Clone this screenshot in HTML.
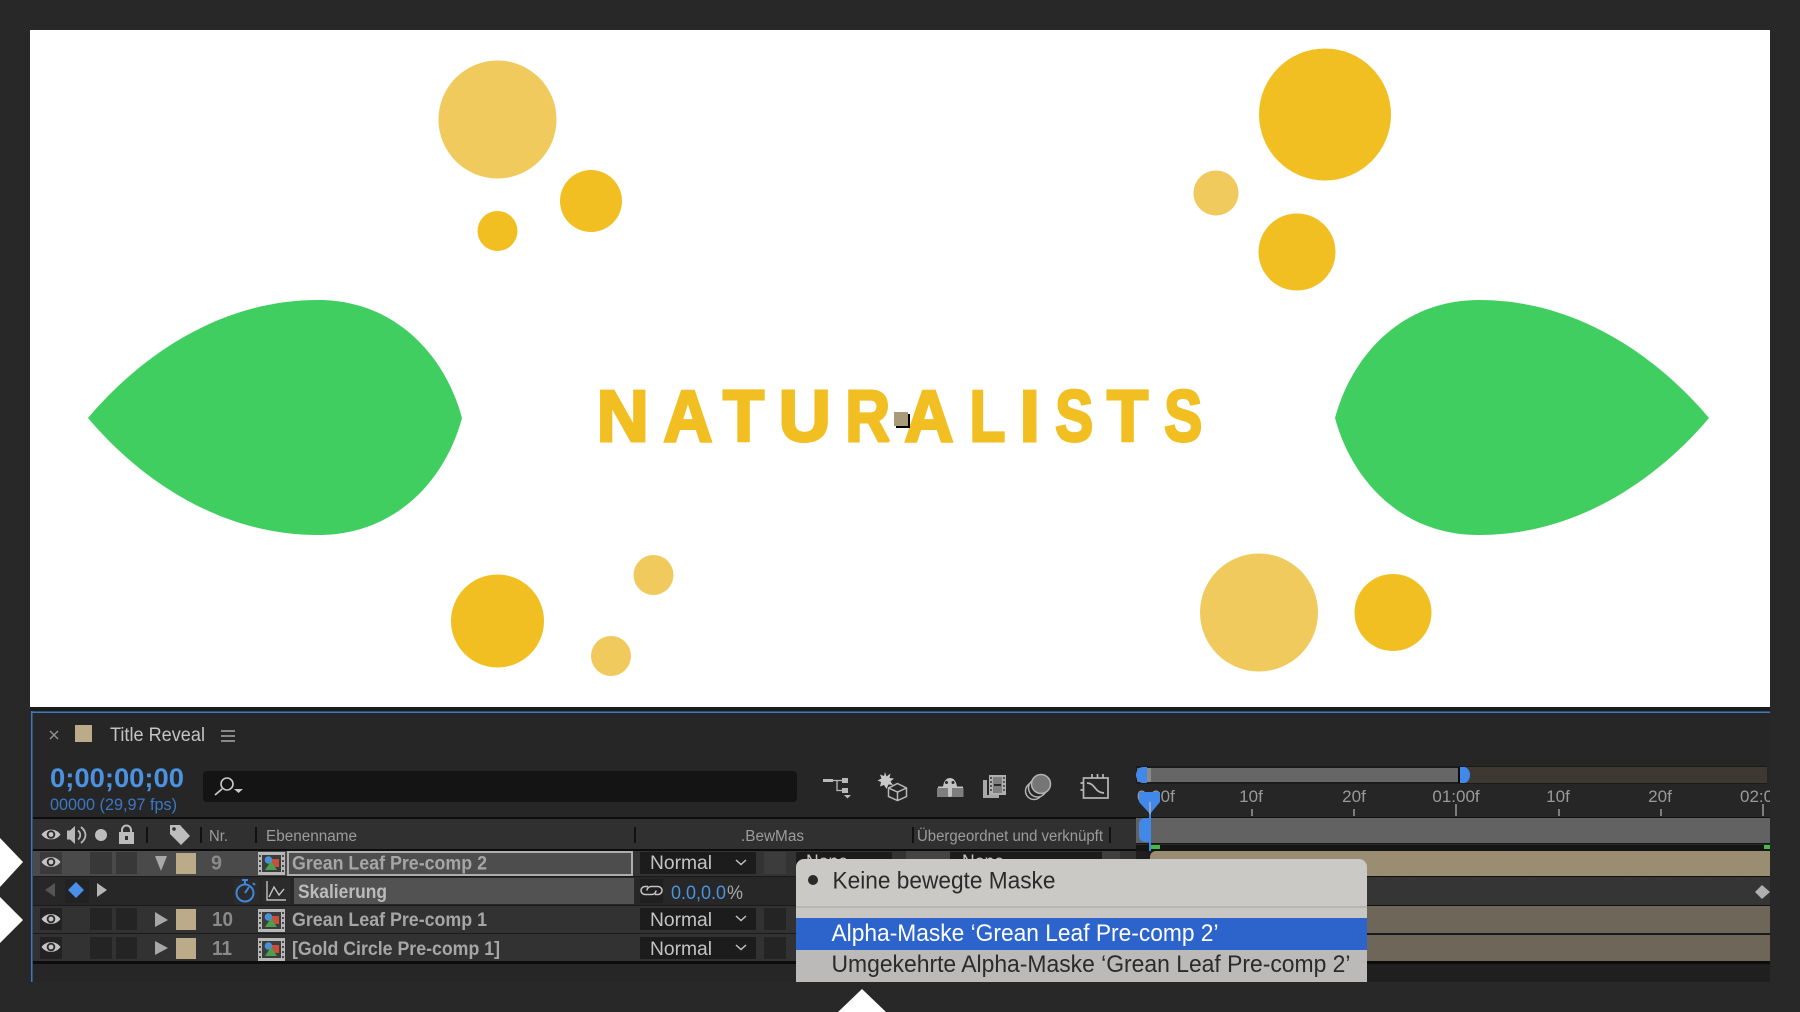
<!DOCTYPE html>
<html><head><meta charset="utf-8"><title>Title Reveal</title>
<style>
html,body{margin:0;padding:0;background:#282828;width:1800px;height:1012px;overflow:hidden}
svg{display:block}
text{font-family:"Liberation Sans",sans-serif}
.n{font-weight:700;font-size:19px;fill:#a6a6a6}
.h{font-size:15.5px;fill:#9c9c9c}
.num{font-weight:700;font-size:20px;fill:#8a8a8a}
.m{font-size:19px;fill:#c4c4c4}
.p{font-size:24px}
</style></head><body>
<svg xmlns="http://www.w3.org/2000/svg" width="1800" height="1012" viewBox="0 0 1800 1012">
<defs>
<clipPath id="tl"><rect x="1136" y="760" width="634" height="222"/></clipPath>
<clipPath id="pop"><path d="M796 982V867a8 8 0 0 1 8-8H1359a8 8 0 0 1 8 8V982Z"/></clipPath>
<filter id="noise" x="0" y="0" width="100%" height="100%"><feTurbulence type="fractalNoise" baseFrequency=".55" numOctaves="2" seed="4"/><feColorMatrix values="0 0 0 0 .3  0 0 0 0 .27  0 0 0 0 .2  1.6 0 0 0 -.55"/></filter>
<g id="eye"><path d="M-9.500 0C-5-6.500 5-6.500 9.500 0C5 6.500-5 6.500-9.500 0Z" fill="#c4c4c4"/><circle r="4.300" fill="#2c2c2c"/><circle r="2.400" fill="#c4c4c4"/></g>
<g id="comp"><rect x="0" y="0" width="27" height="23" fill="#b8b8b8"/><rect x="4" y="3" width="19" height="17" fill="#3c3c3c"/><g fill="#4a4a4a"><rect x="1" y="3" width="2" height="2"/><rect x="1" y="8" width="2" height="2"/><rect x="1" y="13" width="2" height="2"/><rect x="1" y="18" width="2" height="2"/><rect x="24" y="3" width="2" height="2"/><rect x="24" y="8" width="2" height="2"/><rect x="24" y="13" width="2" height="2"/><rect x="24" y="18" width="2" height="2"/></g><rect x="13" y="7" width="8" height="8" fill="#c8503a"/><circle cx="10.500" cy="8" r="3.800" fill="#4a8fd8"/><path d="M7 18L13 9L19 18Z" fill="#4aa04e"/></g>
<path id="chev" d="M0 0L5 4.500L10 0" fill="none" stroke="#c0c0c0" stroke-width="1.500"/>
</defs>

<rect width="1800" height="1012" fill="#282828"/>

<!-- composition -->
<rect x="30" y="30" width="1740" height="677" fill="#fff"/>
<g fill="#f1bf22">
<circle cx="591" cy="201" r="31"/><circle cx="497.500" cy="231" r="20"/><circle cx="497.500" cy="621" r="46.500"/>
<circle cx="1325" cy="114.500" r="66"/><circle cx="1297" cy="252" r="38.500"/><circle cx="1393" cy="612.500" r="38.500"/>
</g>
<g fill="#f0ca5c">
<circle cx="497.500" cy="119.500" r="59"/><circle cx="653.500" cy="575" r="20"/><circle cx="611" cy="656" r="20"/>
<circle cx="1216" cy="193" r="22.500"/><circle cx="1259" cy="612.500" r="59"/>
</g>
<path d="M88 418C130 368 210 300 318 300C395 300 445 355 462 418C445 481 395 535 318 535C210 535 130 468 88 418Z" fill="#41ce60"/>
<path d="M1709 418C1667 368 1587 300 1479 300C1402 300 1352 355 1335 418C1352 481 1402 535 1479 535C1587 535 1667 468 1709 418Z" fill="#41ce60"/>
<g font-weight="700" font-size="72" fill="#f1bf22" stroke="#f1bf22" stroke-width="3" stroke-miterlimit="2">
<text transform="translate(596.700 441.200)">N</text>
<text transform="translate(663.500 441.200) scale(.94 1)">A</text>
<text transform="translate(723.100 441.200) scale(.93 1)">T</text>
<text transform="translate(778.800 441.200)">U</text>
<text transform="translate(845.400 441.200) scale(.86 1)">R</text>
<text transform="translate(904.500 441.200) scale(.94 1)">A</text>
<text transform="translate(969.600 441.200) scale(.81 1)">L</text>
<text transform="translate(1019.700 441.200)">I</text>
<text transform="translate(1055.300 441.200) scale(.79 1)">S</text>
<text transform="translate(1107.100 441.200) scale(.93 1)">T</text>
<text transform="translate(1164.300 441.200) scale(.79 1)">S</text>
</g>
<rect x="896" y="414" width="14" height="14" fill="#000"/>
<rect x="894" y="412" width="14" height="14" fill="#a99a7a"/>

<!-- panel -->
<rect x="31" y="707" width="1739" height="275" fill="#262626"/>
<rect x="30" y="707" width="1740" height="4" fill="#1c1c1c"/>
<rect x="31" y="711.500" width="1739" height="1.500" fill="#3f78c2"/>
<rect x="31" y="711" width="1.500" height="271" fill="#3f78c2"/>

<!-- tab -->
<path d="M50 731L58 739M58 731L50 739" stroke="#8f8f8f" stroke-width="1.500"/>
<rect x="75" y="725" width="17" height="17" fill="#bcab88"/>
<text x="110" y="741" font-size="19" fill="#c4c4c4" textLength="95" lengthAdjust="spacingAndGlyphs">Title Reveal</text>
<path d="M221 731H235M221 736H235M221 741H235" stroke="#a8a8a8" stroke-width="1.400"/>

<!-- timecode -->
<text x="50" y="787" font-size="27" font-weight="700" fill="#4b92e0" textLength="134" lengthAdjust="spacingAndGlyphs">0;00;00;00</text>
<text x="50" y="810" font-size="17" fill="#3b78c4" textLength="127" lengthAdjust="spacingAndGlyphs">00000 (29,97 fps)</text>
<rect x="203" y="771" width="594" height="31" rx="4" fill="#141414"/>
<circle cx="227" cy="784" r="6" fill="none" stroke="#c8c8c8" stroke-width="1.600"/>
<path d="M222 789L215 795" stroke="#c8c8c8" stroke-width="1.800"/>
<path d="M234 789H243L238.500 793Z" fill="#c8c8c8"/>

<!-- toolbar icons -->
<g fill="#b8b8b8">
<rect x="823" y="779" width="10" height="3"/>
<rect x="842" y="778" width="6" height="5"/>
<rect x="842" y="788" width="6" height="5"/>
<path d="M844 795H851L847.500 798.500Z"/>
</g>
<path d="M833 780.500H842M837 780.500V790.500H842" fill="none" stroke="#b8b8b8" stroke-width="1.300"/>
<path d="M885 772L886.500 776.500L890.500 773.500L889.500 778L894 778.500L890.500 781.500L893 785L888.500 784.500L886.500 789L884 785L880 786.500L881 782L877.500 780.500L881.500 778.500L880 774.500L884 776Z" fill="#c8c8c8"/>
<path d="M897.500 783.500L906.500 788V796.500L897.500 800.500L888.500 796.500V788ZM888.500 788L897.500 792L906.500 788M897.500 792V800.500" fill="none" stroke="#b8b8b8" stroke-width="1.500"/>
<rect x="937" y="788" width="26.500" height="9" fill="#7e7e7e"/>
<path d="M938 788V786.500H943C944 780 947 778 950 778C953 778 956 780 957 786.500H963V788Z" fill="#c4c4c4"/>
<circle cx="946.500" cy="782.500" r="1.500" fill="#2a2a2a"/><circle cx="953" cy="782.500" r="1.500" fill="#2a2a2a"/>
<path d="M948 786H952V795a2 2 0 0 1-4 0Z" fill="#c4c4c4"/>

<path d="M983 780H987V795H999V798H983Z" fill="#a8a8a8"/>
<rect x="989" y="775" width="17" height="20" fill="#b0b0b0"/>
<rect x="993" y="777" width="9" height="16" fill="#7f7f7f"/>
<rect x="994" y="784" width="7" height="2" fill="#2a2a2a"/>
<g fill="#555"><rect x="990" y="777" width="2" height="2"/><rect x="990" y="781" width="2" height="2"/><rect x="990" y="785" width="2" height="2"/><rect x="990" y="789" width="2" height="2"/><rect x="1003" y="777" width="2" height="2"/><rect x="1003" y="781" width="2" height="2"/><rect x="1003" y="785" width="2" height="2"/><rect x="1003" y="789" width="2" height="2"/></g>

<g fill="#262626" stroke="#b4b4b4" stroke-width="1.500">
<circle cx="1034" cy="791" r="8.500"/><circle cx="1037.500" cy="788" r="9"/>
<circle cx="1041" cy="784" r="9.500" fill="#767676"/>
</g>

<g fill="none" stroke="#b8b8b8" stroke-width="1.700">
<rect x="1083.500" y="778" width="24.500" height="20"/>
<path d="M1087 783C1095 783 1095 793 1104 793"/>
<path d="M1092 774V778M1097.500 774V778M1103 774V778M1080.500 783H1083M1080.500 790H1083"/>
</g>

<!-- header row -->
<rect x="33" y="817" width="1737" height="2" fill="#0c0c0c"/>
<rect x="33" y="819" width="1103" height="30" fill="#303030"/>
<rect x="33" y="849" width="1103" height="2" fill="#0c0c0c"/>
<use href="#eye" x="51" y="834.500"/>
<path d="M67 830.500H70L75 826V844L70 839.500H67Z" fill="#b8b8b8"/>
<path d="M78 830.500C81 833 81 837 78 839.500M81 827C87 832 87 838 81 843" fill="none" stroke="#b8b8b8" stroke-width="1.800"/>
<circle cx="101" cy="835" r="6" fill="#bdbdbd"/>
<rect x="119" y="832" width="15" height="12" fill="#bdbdbd"/>
<path d="M122 832V830a4.500 4.500 0 0 1 9 0V832" fill="none" stroke="#bdbdbd" stroke-width="2"/>
<rect x="125" y="836" width="3" height="4" fill="#333"/>
<rect x="146" y="827" width="2" height="16" fill="#111"/>
<path d="M170 825H180L190 836L181 845L170 834Z" fill="#bdbdbd"/>
<circle cx="174" cy="829" r="1.800" fill="#303030"/>
<rect x="200" y="827" width="2" height="16" fill="#111"/>
<rect x="255" y="827" width="2" height="16" fill="#111"/>
<rect x="634" y="827" width="2" height="16" fill="#111"/>
<rect x="912" y="827" width="2" height="16" fill="#111"/>
<rect x="1109" y="827" width="2" height="16" fill="#111"/>
<text x="209" y="841" class="h" textLength="19" lengthAdjust="spacingAndGlyphs">Nr.</text>
<text x="266" y="841" class="h" textLength="91" lengthAdjust="spacingAndGlyphs">Ebenenname</text>
<text x="741" y="841" class="h" textLength="63" lengthAdjust="spacingAndGlyphs">.BewMas</text>
<text x="917" y="841" class="h" textLength="186" lengthAdjust="spacingAndGlyphs">Übergeordnet und verknüpft</text>

<!-- layer rows -->
<rect x="33" y="851" width="1103" height="25" fill="#333"/>
<rect x="33" y="851" width="255" height="25" fill="#4a4a4a"/>
<rect x="33" y="877" width="1103" height="28" fill="#272727"/>
<rect x="33" y="906" width="1103" height="27" fill="#323232"/>
<rect x="33" y="934" width="1103" height="27" fill="#323232"/>
<rect x="33" y="876" width="1103" height="1" fill="#1a1a1a"/>
<rect x="33" y="905" width="1103" height="1" fill="#1a1a1a"/>
<rect x="33" y="933" width="1103" height="1" fill="#1a1a1a"/>
<rect x="33" y="961" width="1737" height="3" fill="#0c0c0c"/>

<!-- switch boxes -->
<rect x="40" y="852" width="22" height="22" fill="#3a3a3a"/><rect x="90" y="852" width="22" height="22" fill="#383838"/><rect x="116" y="852" width="21" height="22" fill="#383838"/>
<rect x="40" y="908" width="22" height="22" fill="#222"/><rect x="90" y="908" width="22" height="22" fill="#242424"/><rect x="116" y="908" width="21" height="22" fill="#242424"/>
<rect x="40" y="937" width="22" height="22" fill="#222"/><rect x="90" y="937" width="22" height="22" fill="#242424"/><rect x="116" y="937" width="21" height="22" fill="#242424"/>
<use href="#eye" x="51" y="862"/><use href="#eye" x="51" y="919"/><use href="#eye" x="51" y="947"/>

<!-- twirl + labels -->
<path d="M155 856H167L161 871Z" fill="#a8a8a8"/>
<path d="M155 912L168 920L155 927Z" fill="#a8a8a8"/>
<path d="M155 941L168 948L155 955Z" fill="#a8a8a8"/>
<rect x="176" y="853" width="20" height="21" fill="#bcab88"/>
<rect x="176" y="909" width="20" height="21" fill="#bcab88"/>
<rect x="176" y="938" width="20" height="21" fill="#bcab88"/>
<text x="211" y="869.500" class="num" textLength="11" lengthAdjust="spacingAndGlyphs">9</text>
<text x="212" y="926" class="num" textLength="21" lengthAdjust="spacingAndGlyphs">10</text>
<text x="212" y="955" class="num" textLength="20" lengthAdjust="spacingAndGlyphs">11</text>
<use href="#comp" x="258" y="852"/><use href="#comp" x="258" y="909"/><use href="#comp" x="258" y="938"/>

<!-- names -->
<rect x="288" y="852" width="344" height="23" fill="#4d4d4d" stroke="#aeaeae" stroke-width="2"/>
<text x="292" y="869.500" class="n" textLength="195" lengthAdjust="spacingAndGlyphs">Grean Leaf Pre-comp 2</text>
<rect x="294" y="878" width="340" height="26" fill="#525252"/>
<text x="298" y="898" class="n" style="fill:#bbb" textLength="89" lengthAdjust="spacingAndGlyphs">Skalierung</text>
<text x="292" y="926" class="n" textLength="195" lengthAdjust="spacingAndGlyphs">Grean Leaf Pre-comp 1</text>
<text x="292" y="955" class="n" textLength="208" lengthAdjust="spacingAndGlyphs">[Gold Circle Pre-comp 1]</text>

<!-- skal row controls -->
<path d="M55 883V897L45 890Z" fill="#555"/>
<rect x="65" y="879" width="24" height="24" fill="#222"/>
<path d="M76 882L84 890L76 898L68 890Z" fill="#4a90e8"/>
<path d="M97 883V897L107 890Z" fill="#b5b5b5"/>
<rect x="234" y="879" width="26" height="25" fill="#2b2b2b"/>
<rect x="262" y="879" width="28" height="25" fill="#2b2b2b"/>
<g fill="none" stroke="#3f86dc" stroke-width="2">
<circle cx="245" cy="893" r="8.500"/><path d="M245 893L249 887M242 880H248M245 880V884M253 883L255 885"/>
</g>
<path d="M267 881V900H286M269 897L274 887L279 895L284 889" fill="none" stroke="#c0c0c0" stroke-width="1.400"/>

<!-- mode column -->
<rect x="640" y="852" width="116" height="22" fill="#1c1c1c"/>
<rect x="640" y="908" width="116" height="22" fill="#1c1c1c"/>
<rect x="640" y="937" width="116" height="22" fill="#1c1c1c"/>
<text x="650" y="869" class="m" textLength="62" lengthAdjust="spacingAndGlyphs">Normal</text>
<text x="650" y="926" class="m" textLength="62" lengthAdjust="spacingAndGlyphs">Normal</text>
<text x="650" y="955" class="m" textLength="62" lengthAdjust="spacingAndGlyphs">Normal</text>
<use href="#chev" x="736" y="860"/><use href="#chev" x="736" y="916"/><use href="#chev" x="736" y="945"/>
<rect x="640" y="879" width="23" height="24" fill="#1f1f1f"/>
<path d="M648 887H645a4 4 0 0 0 0 8H652a4 4 0 0 0 4-4M655 895H658a4 4 0 0 0 0-8H651a4 4 0 0 0-4 4" fill="none" stroke="#c4c4c4" stroke-width="1.500" transform="translate(0 -.5)"/>
<text x="671" y="899" font-size="19" fill="#4b92e0" textLength="55" lengthAdjust="spacingAndGlyphs">0.0,0.0</text>
<text x="727" y="899" font-size="19" fill="#a8a8a8" textLength="16" lengthAdjust="spacingAndGlyphs">%</text>
<rect x="764" y="852" width="22" height="22" fill="#3c3c3c"/>
<rect x="764" y="908" width="22" height="22" fill="#242424"/>
<rect x="764" y="937" width="22" height="22" fill="#242424"/>
<rect x="796" y="852" width="96" height="22" fill="#1c1c1c"/>
<rect x="906" y="851" width="44" height="24" fill="#444"/>
<rect x="950" y="852" width="152" height="22" fill="#1c1c1c"/>
<rect x="1102" y="851" width="18" height="24" fill="#3f3f3f"/>
<text x="806" y="868" class="m" textLength="42" lengthAdjust="spacingAndGlyphs">None</text>
<text x="962" y="868" class="m" textLength="42" lengthAdjust="spacingAndGlyphs">None</text>

<!-- timeline -->
<g clip-path="url(#tl)">
<rect x="1136" y="765" width="634" height="52" fill="#262626"/>
<rect x="1136" y="766" width="631" height="18" fill="#0f0f0f" opacity=".5"/>
<rect x="1137" y="768" width="322" height="14" fill="#666"/>
<rect x="1459" y="767" width="308" height="16" fill="#3e3833"/>
<path d="M1147 767H1143a7 8 0 0 0 0 16H1147Z" fill="#4288e8"/>
<rect x="1147" y="768" width="4" height="14" fill="#8a8a8a"/>
<rect x="1458" y="767" width="2" height="16" fill="#0c0c0c"/>
<path d="M1460 767H1464a6 8 0 0 1 0 16H1460Z" fill="#4288e8"/>
<g font-size="17" fill="#9a9a9a">
<text x="1251" y="802" text-anchor="middle">10f</text>
<text x="1354" y="802" text-anchor="middle">20f</text>
<text x="1456" y="802" text-anchor="middle">01:00f</text>
<text x="1558" y="802" text-anchor="middle">10f</text>
<text x="1660" y="802" text-anchor="middle">20f</text>
<text x="1740" y="802">02:00f</text>
<text x="1137" y="802">0:00f</text>
</g>
<path d="M1252 809V816M1354 809V816M1456 804V816M1559 809V816M1661 809V816M1763 804V816" stroke="#9a9a9a" stroke-width="1.500"/>
<rect x="1136" y="817" width="634" height="26" fill="#626262"/>
<rect x="1136" y="817" width="634" height="1" fill="#111"/>
<rect x="1136" y="843" width="634" height="8" fill="#151515"/>
<rect x="1136" y="844" width="634" height="1" fill="#2a2a2a"/>
<path d="M1150 818H1145a6 6 0 0 0-6 6V836a6 6 0 0 0 6 6H1150Z" fill="#4288e8"/>
<rect x="1150" y="845" width="10" height="4" fill="#48b848"/>
<rect x="1764" y="845" width="6" height="4" fill="#48b848"/>
<rect x="1136" y="851" width="634" height="25" fill="#1e1e1e"/>
<path d="M1150 876V857a6 6 0 0 1 6-6H1770V876Z" fill="#9a8d72"/>
<rect x="1156" y="851" width="614" height="25" filter="url(#noise)" opacity=".35"/>
<rect x="1136" y="876" width="634" height="1" fill="#111"/>
<rect x="1136" y="877" width="634" height="28" fill="#353535"/>
<rect x="1136" y="905" width="634" height="1" fill="#111"/>
<rect x="1136" y="906" width="634" height="27" fill="#6e6759"/>
<rect x="1136" y="933" width="634" height="2" fill="#1a1a1a"/>
<rect x="1136" y="935" width="634" height="26" fill="#6e6759"/>
<rect x="1136" y="961" width="634" height="3" fill="#0c0c0c"/>
<rect x="1136" y="964" width="634" height="18" fill="#1f1f1f"/>
<path d="M1755 892L1762 885L1770 892L1762 899Z" fill="#b0b0b0"/>
<rect x="1149" y="805" width="2" height="46" fill="#4288e8"/>
<path d="M1139 792H1160V802L1150 814L1139 802Z" fill="#4288e8"/>
<rect x="1149" y="802" width="2" height="12" fill="#8fa8c8"/>
</g>

<!-- popup -->
<g clip-path="url(#pop)">
<rect x="796" y="859" width="571" height="47" fill="#cbc9c5"/>
<rect x="796" y="906" width="571" height="2" fill="#b8b6b2"/>
<rect x="796" y="908" width="571" height="10" fill="#c9c7c4"/>
<rect x="796" y="918" width="571" height="32" fill="#2c64cb"/>
<rect x="796" y="950" width="571" height="32" fill="#bcbab8"/>
<circle cx="813" cy="880" r="5" fill="#2a2a2a"/>
<text x="832.500" y="888.500" class="p" fill="#2b2b2b" textLength="223" lengthAdjust="spacingAndGlyphs">Keine bewegte Maske</text>
<text x="831.500" y="941" class="p" fill="#fff" textLength="387" lengthAdjust="spacingAndGlyphs">Alpha-Maske ‘Grean Leaf Pre-comp 2’</text>
<text x="831.500" y="972" class="p" fill="#2b2b2b" textLength="519" lengthAdjust="spacingAndGlyphs">Umgekehrte Alpha-Maske ‘Grean Leaf Pre-comp 2’</text>
</g>

<!-- arrows -->
<path d="M0 838L23 862L0 887Z" fill="#fff"/>
<path d="M0 897L23 920L0 943Z" fill="#fff"/>
<path d="M862 989L838 1012H886Z" fill="#fff"/>
</svg>
</body></html>
